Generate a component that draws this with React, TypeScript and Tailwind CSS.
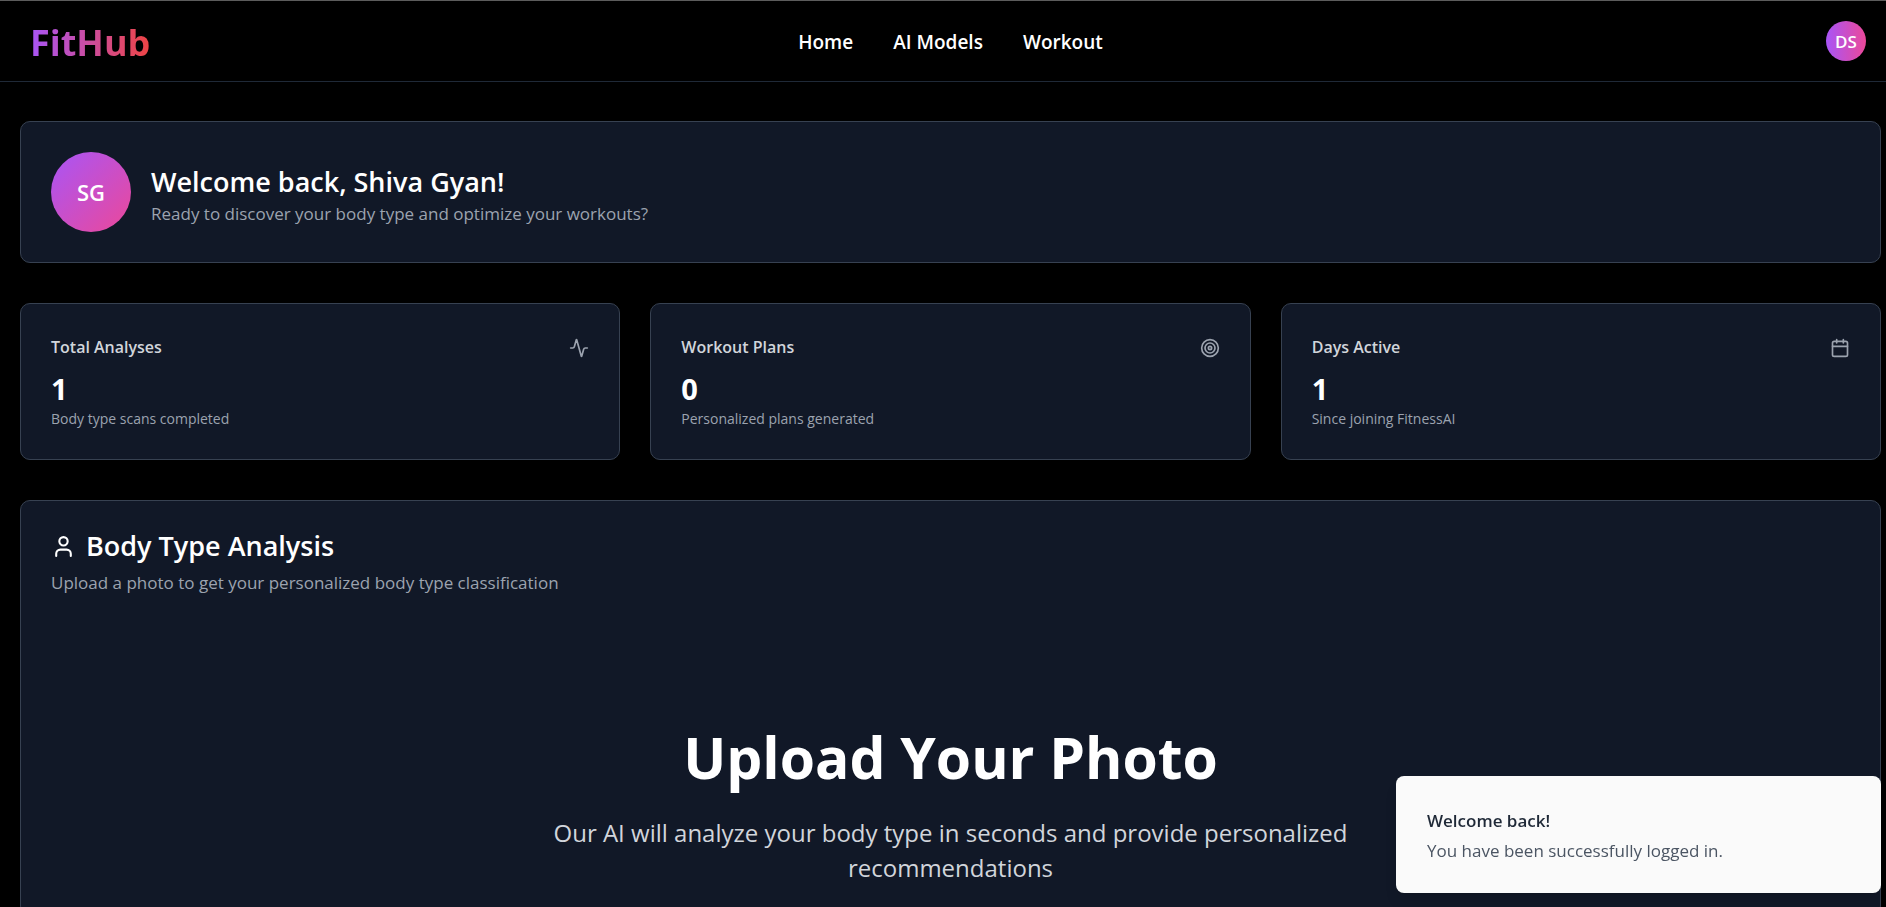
import { Activity, Calendar, Target, User } from "lucide-react";
import type { LucideIcon } from "lucide-react";

const navLinks = ["Home", "AI Models", "Workout"];

interface Stat {
  title: string;
  value: number;
  note: string;
  icon: LucideIcon;
}

const stats: Stat[] = [
  { title: "Total Analyses", value: 1, note: "Body type scans completed", icon: Activity },
  { title: "Workout Plans", value: 0, note: "Personalized plans generated", icon: Target },
  { title: "Days Active", value: 1, note: "Since joining FitnessAI", icon: Calendar },
];

function Header() {
  return (
    <header className="grid h-[82px] grid-cols-[1fr_auto_1fr] items-center border-t border-b border-t-[#5c5c5c] border-b-[#1f2937] pr-[5px] pl-5">
      <a
        href="#"
        className="ml-2.5 justify-self-start bg-linear-to-r/srgb from-[#a855f7] to-[#ef4444] bg-clip-text pt-1 text-[36px] leading-[44px] font-bold text-transparent"
      >
        FitHub
      </a>
      <nav className="flex gap-10 pt-0.5">
        {navLinks.map((label) => (
          <a key={label} href="#" className="text-[19px] leading-7 font-semibold">
            {label}
          </a>
        ))}
      </nav>
      <button
        type="button"
        aria-label="Account menu"
        className="mr-[15px] flex size-10 items-center justify-center justify-self-end rounded-full bg-linear-to-r/srgb from-[#a855f7] to-[#ec4899] pt-0.5 text-[17px] font-semibold"
      >
        DS
      </button>
    </header>
  );
}

function StatCard({ title, value, note, icon: Icon }: Stat) {
  return (
    <article className="rounded-[10px] border border-[#374151] bg-[#111827] p-[30px]">
      <div className="flex items-center justify-between">
        <h3 className="text-[16px] leading-[27px] font-semibold text-[#d1d5db]">{title}</h3>
        <Icon className="size-5 text-[#9ca3af]" />
      </div>
      <p className="mt-2 text-[29px] leading-10 font-bold">{value}</p>
      <p className="text-[14px] leading-5 text-[#9ca3af]">{note}</p>
    </article>
  );
}

function Toast() {
  return (
    <div
      role="status"
      className="fixed right-[5px] bottom-[14px] w-[485px] rounded-lg bg-[#fafafa] px-[31px] pt-[31px] pb-7 shadow-lg"
    >
      <p className="text-[17px] leading-7 font-semibold text-[#1f2937]">Welcome back!</p>
      <p className="mt-0.5 text-[17px] leading-7 text-[#4b5563]">You have been successfully logged in.</p>
    </div>
  );
}

export default function App() {
  return (
    <div className="min-h-screen bg-black font-['Open_Sans',sans-serif] text-white">
      <Header />
      <main className="flex flex-col gap-10 pt-[39px] pr-[5px] pb-10 pl-5">
        <section className="flex items-center gap-5 rounded-[10px] border border-[#374151] bg-[#111827] p-[30px]">
          <div className="flex size-20 items-center justify-center rounded-full bg-linear-to-br/srgb from-[#a855f7] to-[#ec4899] text-[22px] font-semibold">
            SG
          </div>
          <div className="pt-2">
            <h1 className="text-[27px] leading-9 font-semibold">Welcome back, Shiva Gyan!</h1>
            <p className="text-[17px] leading-7 text-[#9ca3af]">
              Ready to discover your body type and optimize your workouts?
            </p>
          </div>
        </section>
        <section className="grid grid-cols-3 gap-[30px]">
          {stats.map((stat) => (
            <StatCard key={stat.title} {...stat} />
          ))}
        </section>
        <section className="rounded-[10px] border border-[#374151] bg-[#111827] p-[30px]">
          <h2 className="flex items-center gap-2.5 text-[27px] leading-[30px] font-semibold">
            <User className="size-[25px]" />
            Body Type Analysis
          </h2>
          <p className="mt-2 text-[17px] leading-7 text-[#9ca3af]">
            Upload a photo to get your personalized body type classification
          </p>
          <div className="mx-auto max-w-[840px] pt-[122px] text-center">
            <h2 className="text-[57px] leading-[76px] font-bold">Upload Your Photo</h2>
            <p className="mt-5 text-[24px] leading-[35px] text-[#d1d5db]">
              Our AI will analyze your body type in seconds and provide personalized recommendations
            </p>
          </div>
        </section>
      </main>
      <Toast />
    </div>
  );
}
